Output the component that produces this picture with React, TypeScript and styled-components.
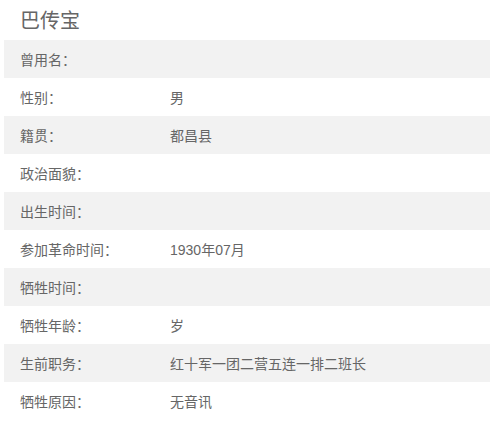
import { createGlobalStyle, styled } from 'styled-components';

const GlobalStyle = createGlobalStyle`
  body {
    margin: 0;
    background: #fff;
    font-family: "Liberation Sans", "Noto Sans CJK SC", sans-serif;
  }
`;

const Page = styled.div`
  width: 490px;
  display: flex;
  flex-direction: column;
`;

const Title = styled.h2`
  margin: 0;
  padding-left: 20px;
  height: 40px;
  line-height: 42px;
  font-size: 20px;
  font-weight: normal;
  color: #666;
`;

const Table = styled.div`
  margin-left: 4px;
  display: flex;
  flex-direction: column;
`;

const Row = styled.div<{ $shaded: boolean }>`
  display: flex;
  align-items: center;
  height: 38px;
  padding-left: 16px;
  background: ${(p) => (p.$shaded ? '#f2f2f2' : '#fff')};
  font-size: 14px;
  color: #666;
`;

const Label = styled.span`
  width: 150px;
`;

const Value = styled.span`
  flex: 1;
`;

const rows: [string, string][] = [
  ['曾用名：', ''],
  ['性别：', '男'],
  ['籍贯：', '都昌县'],
  ['政治面貌：', ''],
  ['出生时间：', ''],
  ['参加革命时间：', '1930年07月'],
  ['牺牲时间：', ''],
  ['牺牲年龄：', '岁'],
  ['生前职务：', '红十军一团二营五连一排二班长'],
  ['牺牲原因：', '无音讯'],
];

const App = () => (
  <Page>
    <GlobalStyle />
    <Title>巴传宝</Title>
    <Table>
      {rows.map(([label, value], i) => (
        <Row key={label} $shaded={i % 2 === 0}>
          <Label>{label}</Label>
          <Value>{value}</Value>
        </Row>
      ))}
    </Table>
  </Page>
);

export default App;
